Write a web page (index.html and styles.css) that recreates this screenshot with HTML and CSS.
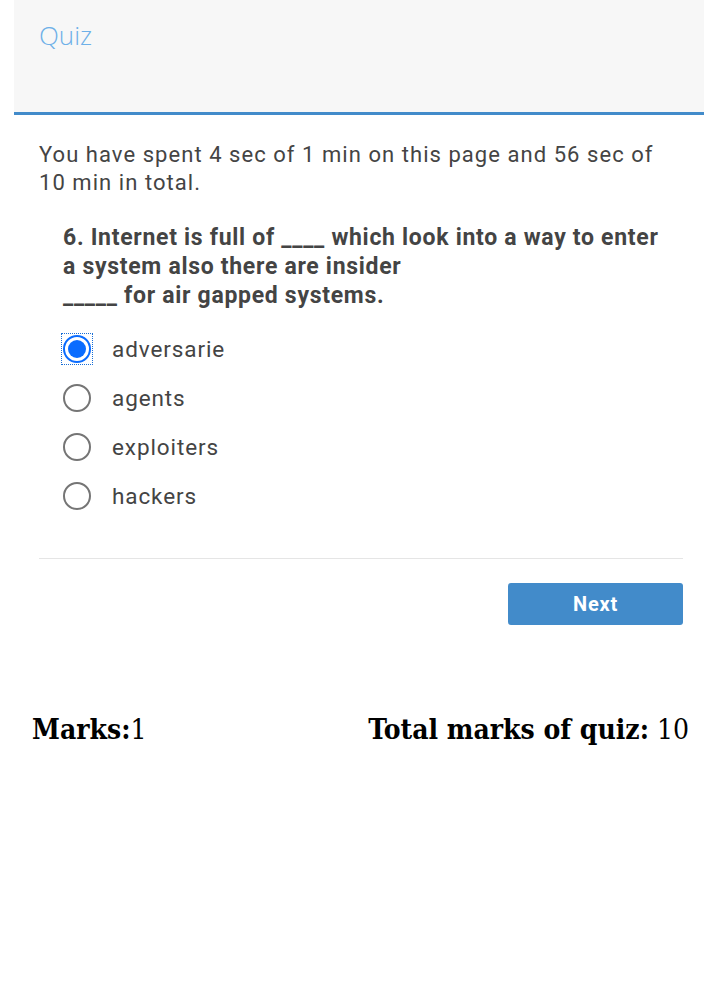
FILE: index.html
```html
<!DOCTYPE html>
<html>
<head>
<meta charset="utf-8">
<link rel="stylesheet" href="styles.css">
</head>
<body>
<div class="page">
  <header class="quiz-header">
    <h1 class="quiz-title">Quiz</h1>
  </header>
  <main class="quiz-body">
    <p class="timer">You have spent 4 sec of 1 min on this page and 56 sec of 10 min in total.</p>
    <div class="question">
      <p class="question-text">6. Internet is full of ____ which look into a way to enter a system also there are insider<br>_____ for air gapped systems.</p>
      <ul class="options">
        <li class="option"><span class="radio-box focused"><span class="radio checked"></span></span><span class="label">adversarie</span></li>
        <li class="option"><span class="radio-box"><span class="radio"></span></span><span class="label">agents</span></li>
        <li class="option"><span class="radio-box"><span class="radio"></span></span><span class="label">exploiters</span></li>
        <li class="option"><span class="radio-box"><span class="radio"></span></span><span class="label">hackers</span></li>
      </ul>
    </div>
    <hr class="divider">
    <div class="actions">
      <button class="btn-next">Next</button>
    </div>
  </main>
</div>
<footer class="marks">
  <div><b>Marks:</b>1</div>
  <div><b>Total marks of quiz:</b> 10</div>
</footer>
</body>
</html>
```
FILE: styles.css
```css
html, body {
  margin: 0;
  padding: 0;
  background: #fff;
}
.page {
  margin-left: 14px;
  font-family: Roboto, "Liberation Sans", sans-serif;
  color: #444;
}
.quiz-header {
  background: #f7f7f7;
  height: 112px;
  border-bottom: 3px solid #428bca;
  box-sizing: content-box;
}
.quiz-title {
  margin: 0;
  padding: 18px 0 0 25px;
  font-family: "Open Sans", sans-serif;
  font-weight: 300;
  font-size: 26px;
  line-height: 34px;
  color: #6eb0e8;
}
.quiz-body {
  padding: 0 21px 0 25px;
}
.timer {
  margin: 0;
  padding-top: 26px;
  font-size: 22px;
  letter-spacing: 1.05px;
  line-height: 28px;
}
.question {
  padding: 0 24px;
  margin-top: 26px;
}
.question-text {
  margin: 0;
  font-weight: 700;
  font-size: 23px;
  letter-spacing: 0.7px;
  line-height: 29px;
}
.options {
  list-style: none;
  margin: 14px 0 0;
  padding: 0;
}
.option {
  display: flex;
  align-items: center;
  height: 49px;
  font-size: 22.5px;
  letter-spacing: 0.9px;
}
.radio-box {
  display: flex;
  margin-right: 21px;
  flex: none;
}
.radio-box.focused {
  outline: 1px dotted #1a6fd6;
  margin-left: -1px;
  margin-right: 20px;
  padding: 1px;
}
.radio {
  width: 24px;
  height: 24px;
  border: 2px solid #757575;
  border-radius: 50%;
  position: relative;
}
.radio.checked {
  border-color: #0a6cff;
}
.radio.checked::after {
  content: "";
  position: absolute;
  left: 3px;
  top: 3px;
  width: 18px;
  height: 18px;
  border-radius: 50%;
  background: #0a6cff;
}
.divider {
  border: 0;
  border-top: 1px solid #e5e5e5;
  margin: 38px 0 0;
}
.actions {
  display: flex;
  justify-content: flex-end;
  padding-top: 24px;
}
.btn-next {
  width: 175px;
  height: 42px;
  background: #428bca;
  border: 0;
  border-radius: 3px;
  color: #fff;
  font-family: Roboto, "Liberation Sans", sans-serif;
  font-weight: 700;
  font-size: 20px;
  letter-spacing: 0.8px;
}
.marks {
  display: flex;
  justify-content: space-between;
  padding: 88px 15px 0 32px;
  font-family: "DejaVu Serif Condensed", "DejaVu Serif", serif;
  font-size: 28px;
  color: #000;
}
```
